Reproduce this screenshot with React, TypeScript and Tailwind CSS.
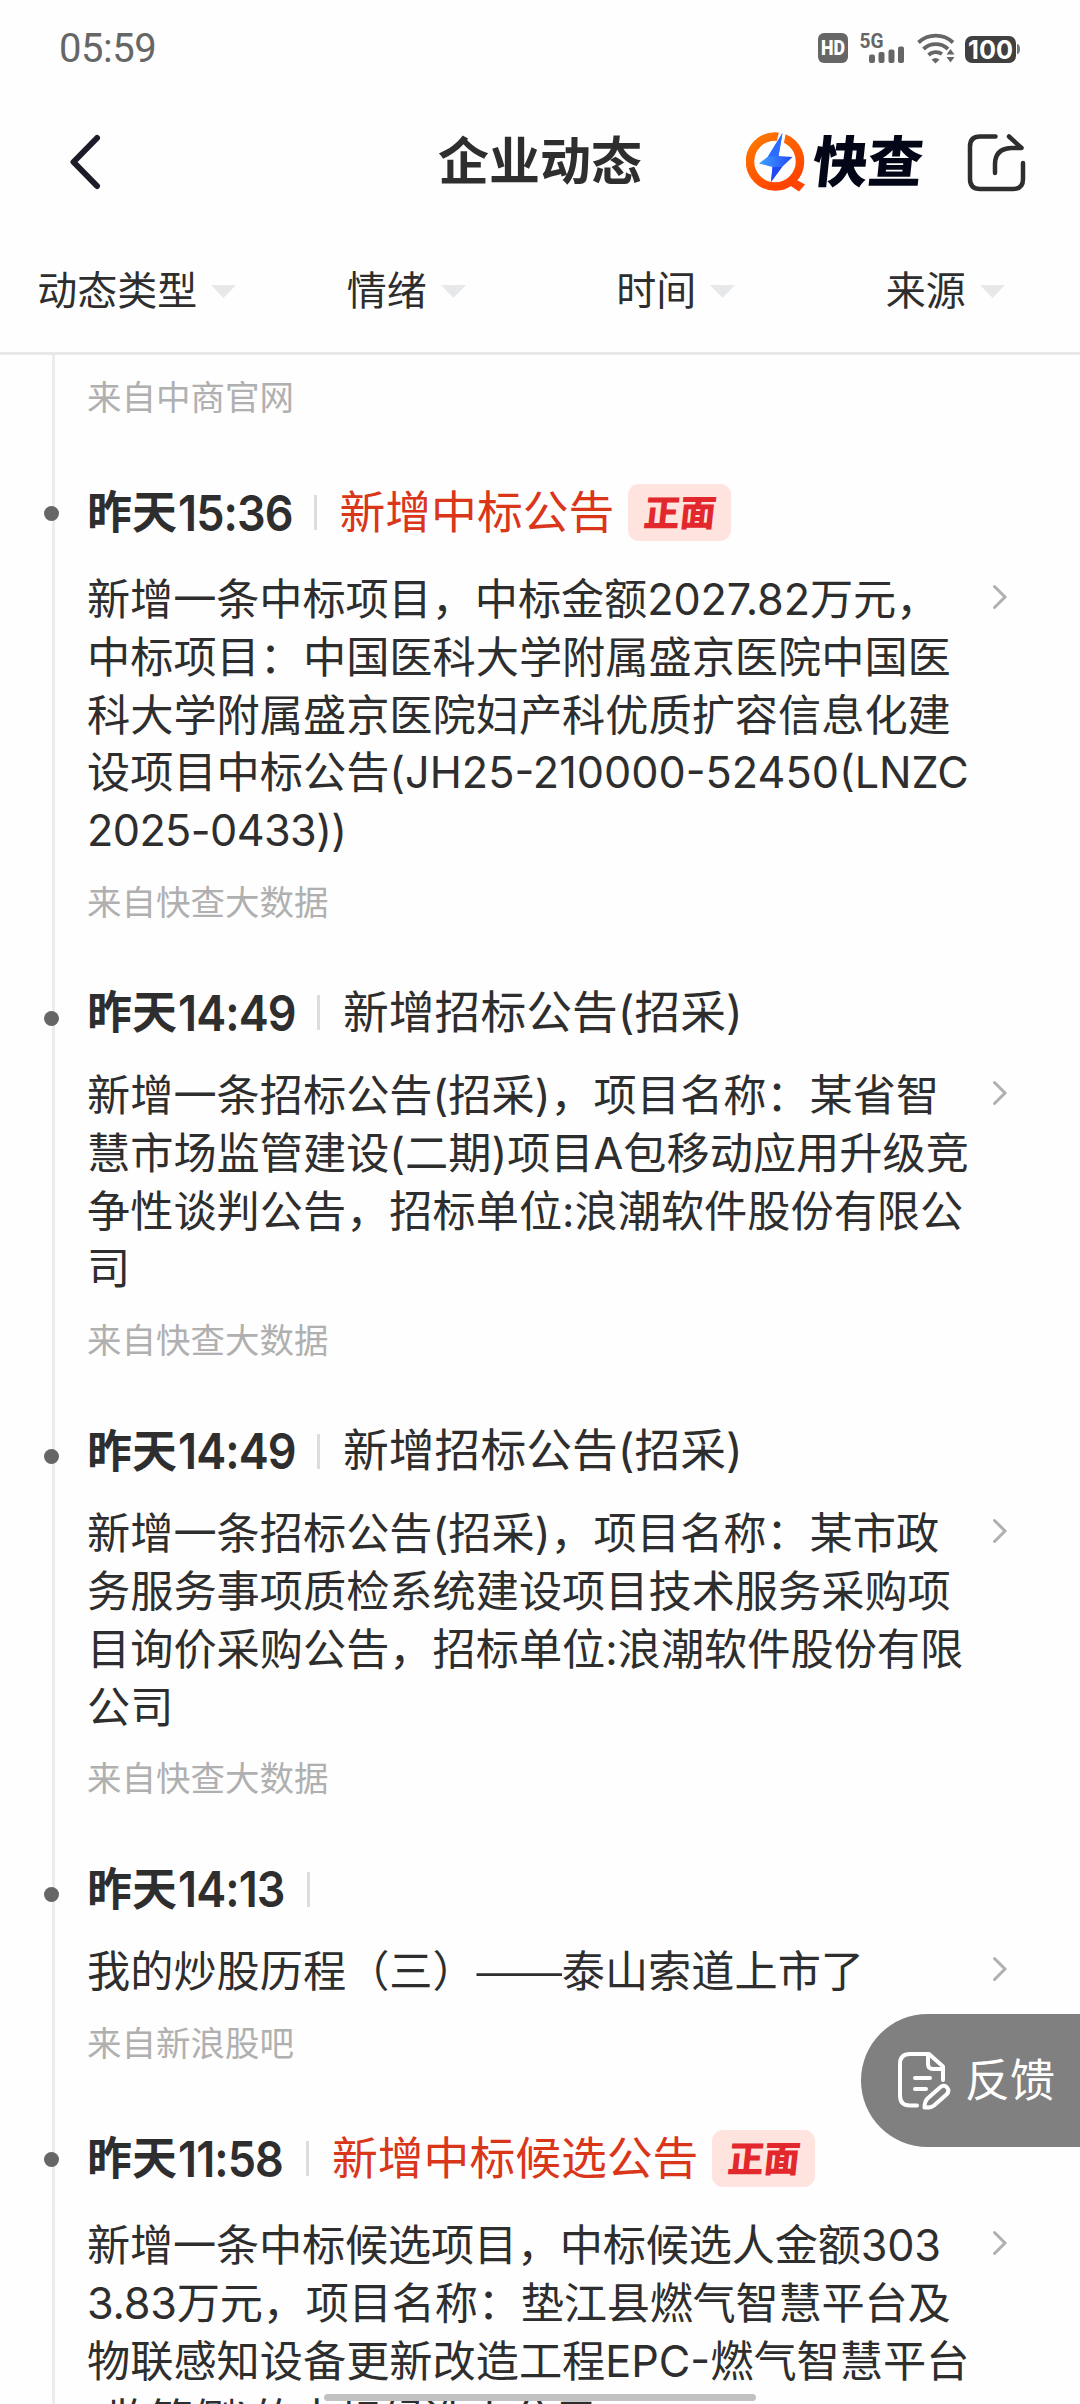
import React from "react";
import clsx from "clsx";

type Line = { text: string; className?: string };

type FeedItem = {
  time: string;
  timeWidth: string;
  title?: string;
  positive?: boolean;
  lines: Line[];
  source?: string;
};

const filters = ["动态类型", "情绪", "时间", "来源"];

const items: FeedItem[] = [
  {
    time: "15:36",
    timeWidth: "w-[135.500px]",
    title: "新增中标公告",
    positive: true,
    lines: [
      { text: "新增一条中标项目，中标金额2027.82万元，", className: "tracking-[-0.1px]" },
      { text: "中标项目：中国医科大学附属盛京医院中国医" },
      { text: "科大学附属盛京医院妇产科优质扩容信息化建" },
      { text: "设项目中标公告(JH25-210000-52450(LNZC" },
      { text: "2025-0433))", className: "tracking-[-0.6px]" },
    ],
    source: "来自快查大数据",
  },
  {
    time: "14:49",
    timeWidth: "w-[139px]",
    title: "新增招标公告(招采)",
    lines: [
      { text: "新增一条招标公告(招采)，项目名称：某省智" },
      { text: "慧市场监管建设(二期)项目A包移动应用升级竞" },
      { text: "争性谈判公告，招标单位:浪潮软件股份有限公" },
      { text: "司" },
    ],
    source: "来自快查大数据",
  },
  {
    time: "14:49",
    timeWidth: "w-[139px]",
    title: "新增招标公告(招采)",
    lines: [
      { text: "新增一条招标公告(招采)，项目名称：某市政" },
      { text: "务服务事项质检系统建设项目技术服务采购项" },
      { text: "目询价采购公告，招标单位:浪潮软件股份有限" },
      { text: "公司" },
    ],
    source: "来自快查大数据",
  },
  {
    time: "14:13",
    timeWidth: "w-[129px]",
    lines: [{ text: "我的炒股历程（三）——泰山索道上市了" }],
    source: "来自新浪股吧",
  },
  {
    time: "11:58",
    timeWidth: "w-[128px]",
    title: "新增中标候选公告",
    positive: true,
    lines: [
      { text: "新增一条中标候选项目，中标候选人金额303", className: "tracking-[-0.2px]" },
      { text: "3.83万元，项目名称：垫江县燃气智慧平台及", className: "tracking-[-0.2px]" },
      { text: "物联感知设备更新改造工程EPC-燃气智慧平台" },
      { text: "-监管侧)的中标候选人公示" },
    ],
  },
];

function StatusBar() {
  return (
    <div className="flex h-[96px] items-center justify-between pl-[59px] pr-[60px] text-[#666]">
      <span className="pt-[2px] font-['Roboto',sans-serif] text-[40px] leading-none tracking-[-0.500px]">
        05:59
      </span>
      <svg className="overflow-visible" width="202" height="32" viewBox="0 0 202 32" fill="#666">
        <rect x="0" y="1" width="30" height="30" rx="6" />
        <text x="3" y="23" fill="#fff" fontSize="20" fontWeight="900" fontFamily="Roboto, sans-serif" textLength="24" lengthAdjust="spacingAndGlyphs">
          HD
        </text>
        <text x="41.5" y="15.5" fontSize="20" fontWeight="700" fontFamily="Roboto, sans-serif" textLength="24" lengthAdjust="spacingAndGlyphs">
          5G
        </text>
        <rect x="51" y="22.5" width="6" height="8.5" rx="2" />
        <rect x="60.5" y="20" width="6" height="11" rx="2" />
        <rect x="70.5" y="17.5" width="6" height="13.5" rx="2" />
        <rect x="80" y="14.5" width="6" height="16.5" rx="2" />
        <g fill="none" stroke="#666" strokeWidth="3.8">
          <path d="M100.5 10.5a25 25 0 0 1 34.5 0" />
          <path d="M105.5 17a18 18 0 0 1 24.5 0" />
          <path d="M110.5 23a11 11 0 0 1 13.5-1" />
        </g>
        <path d="M113.5 27.5q4-3 8 0l-4 4z" />
        <path d="M128.5 22.5l4-5.5 4 5.5zM128.5 25h8l-4 5.5z" />
        <rect x="147" y="4" width="51" height="27" rx="7" fill="#404040" />
        <path d="M199 12c2 0 3 2 3 5s-1 5-3 5z" fill="#777" />
        <text x="150" y="27" fill="#fff" fontSize="26" fontWeight="700" fontFamily="Inter, sans-serif" textLength="45" lengthAdjust="spacingAndGlyphs">
          100
        </text>
      </svg>
    </div>
  );
}

function Logo() {
  return (
    <div className="flex items-center">
      <svg width="62" height="60" viewBox="0 0 62 60">
        <defs>
          <linearGradient id="ring" x1="0" y1="0" x2="0.6" y2="1">
            <stop offset="0" stopColor="#ff7a00" />
            <stop offset="1" stopColor="#ff4400" />
          </linearGradient>
          <linearGradient id="bolt" x1="0" y1="0.5" x2="1" y2="0.6">
            <stop offset="0" stopColor="#3fa4ff" />
            <stop offset="1" stopColor="#2347f5" />
          </linearGradient>
        </defs>
        <circle cx="29" cy="29.5" r="25" fill="none" stroke="url(#ring)" strokeWidth="8.5" />
        <path d="M47 46l12 6.5-6 7-9-6z" fill="#ff4400" />
        <path d="M33 0h7l-3 16h-8z" fill="#fff" />
        <path d="M36.5 1L22 24.5l-9 7 13.5 3.5-1.5 15L36 35l10.5-10-14-1z" fill="url(#bolt)" />
        <path d="M36.5 1L22 24.5l10.5-.5z" fill="#2c6bff" />
        <path d="M26.5 35H36L25 50z" fill="#2347f5" />
      </svg>
      <span className="ml-[5px] w-[112px] -skew-x-6 whitespace-nowrap text-[55px] font-black leading-[60px] text-[#020617]">
        快查
      </span>
    </div>
  );
}

function Header() {
  return (
    <header className="relative flex h-[132px] items-center justify-between pl-[68px] pr-[53px]">
      <svg width="34" height="56" viewBox="0 0 34 56" fill="none" stroke="#1c1c28" strokeWidth="6" strokeLinecap="round" strokeLinejoin="round">
        <path d="M29 4L5.5 28 29 52" />
      </svg>
      <h1 className="absolute inset-x-0 text-center text-[51px] font-bold leading-[60px]">企业动态</h1>
      <div className="flex items-center gap-[41px]">
        <Logo />
        <svg width="61" height="60" viewBox="0 0 61 60" fill="none" stroke="#2e2e2e" strokeWidth="4.5" strokeLinecap="round" strokeLinejoin="round">
          <path d="M29.5 4.5H14q-10 0-10 10V47q0 10 10 10H47q10 0 10-10V31" />
          <path d="M43 4.5L55.5 16H45Q29 17 29 32v9" />
        </svg>
      </div>
    </header>
  );
}

function FilterBar() {
  return (
    <div className="grid h-[127px] grid-cols-4 border-b-[3px] border-[#e8e8e8] pl-[2px] pt-[2px]">
      {filters.map((name) => (
        <div key={name} className="flex items-center justify-center gap-[14px] text-[40px]">
          {name}
          <svg width="25" height="13" viewBox="0 0 25 13" fill="#e6e8ea">
            <path d="M0 0h25L12.5 13z" />
          </svg>
        </div>
      ))}
    </div>
  );
}

function PositiveTag() {
  return (
    <span className="ml-[14px] flex h-[57px] w-[103px] items-center justify-center rounded-[11px] bg-[#ffe3df]">
      <span className="-skew-x-6 text-[36px] font-black leading-none text-[#e3282d]">正面</span>
    </span>
  );
}

function Source({ text }: { text: string }) {
  return <p className="h-[48px] text-[34.500px] leading-[48px] text-[#b0b0b0]">{text}</p>;
}

// a double dash has to fill exactly two character cells
function LineText({ text }: { text: string }) {
  const [before, after] = text.split("——");
  if (after === undefined) return <>{text}</>;
  return (
    <>
      {before}
      <span className="inline-flex w-[86px] justify-center font-['Noto_Sans_CJK_SC',sans-serif] leading-none">
        <span className="scale-x-[1.25]">——</span>
      </span>
      {after}
    </>
  );
}

function TimelineItem({ item }: { item: FeedItem }) {
  return (
    <li className="relative mt-[62px]">
      <span className="absolute -left-[43px] top-[22px] size-[15px] rounded-full bg-[#666]" />
      <div className={clsx("flex items-center", item.positive ? "h-[57px]" : "h-[48px]")}>
        <span className="text-[45px] font-bold leading-none">昨天</span>
        <span className={clsx("ml-[1px] shrink-0", item.timeWidth)}>
          <span className="inline-block origin-left scale-x-[0.9] font-['Inter',sans-serif] text-[50px] font-semibold leading-none tracking-[-1px]">
            {item.time}
          </span>
        </span>
        <span className="h-[35px] w-[3px] shrink-0 bg-[#dddddd]" />
        {item.title && (
          <span
            className={clsx(
              "ml-[23px] whitespace-nowrap text-[45.800px] leading-none",
              item.positive && "text-[#d9361a]",
            )}
          >
            {item.title}
          </span>
        )}
        {item.positive && <PositiveTag />}
      </div>
      <div className="mt-[30px] flex justify-between">
        <p className="text-[43.200px] leading-[57.800px]">
          {item.lines.map((line) => (
            <span key={line.text} className={clsx("block h-[57.800px] whitespace-nowrap", line.className)}>
              <LineText text={line.text} />
            </span>
          ))}
        </p>
        <svg className="mr-[71px] mt-[13px] shrink-0" width="18" height="26" viewBox="0 0 18 26" fill="none" stroke="#b0b0b0" strokeWidth="3" strokeLinecap="round">
          <path d="M3.5 2.5L14 13 3.5 23.5" />
        </svg>
      </div>
      {item.source && (
        <div className="mt-[19px]">
          <Source text={item.source} />
        </div>
      )}
    </li>
  );
}

function FeedbackButton() {
  return (
    <button className="absolute right-0 top-[2014px] flex h-[133px] w-[219px] items-center rounded-l-full bg-[#808080] pl-[36px] text-white">
      <svg width="56" height="60" viewBox="0 0 56 60" fill="none" stroke="#fff" strokeWidth="4" strokeLinecap="round" strokeLinejoin="round">
        <path d="M20 54.5H13q-10 0-10-10V13Q3 3 13 3H32L46 15.5V29" />
        <path d="M31 4v9q0 5 5 5h9" />
        <path d="M18 27h15M18 38h11" />
        <path d="M43 36.5q4-3.5 7 0t-.5 7L37 54.5q-3 2.5-9.5 2 0-6 3-9z" />
      </svg>
      <span className="ml-[12px] whitespace-nowrap text-[45px] leading-none">反馈</span>
    </button>
  );
}

export default function App() {
  return (
    <div className="relative flex h-[2404px] w-[1080px] flex-col overflow-hidden bg-[#fefefe] font-['Inter','Noto_Sans_CJK_SC',sans-serif] text-[#2e2e2e]">
      <StatusBar />
      <Header />
      <FilterBar />

      <main className="flex min-h-0 flex-1 overflow-hidden pl-[52px]">
        <div className="w-[3px] shrink-0 bg-[#ececf0]" />
        <div className="min-w-0 flex-1 pl-[32px] pt-[19px]">
          <Source text="来自中商官网" />
          <ul>
            {items.map((item, i) => (
              <TimelineItem key={i} item={item} />
            ))}
          </ul>
        </div>
      </main>

      <FeedbackButton />

      {/* home indicator */}
      <div className="absolute bottom-[3px] left-[324px] h-[7px] w-[432px] rounded-full bg-[#c2c2c2]" />
    </div>
  );
}
